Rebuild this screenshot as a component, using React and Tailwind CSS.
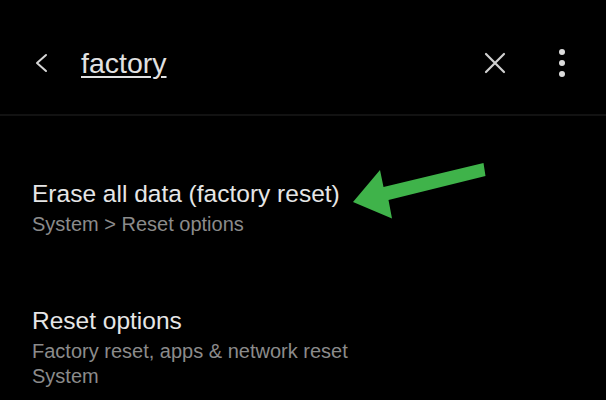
const font = { fontFamily: '"Liberation Sans", Arial, sans-serif' };

const ResultRow = ({ title, lines }) => (
  <div className="pt-[32px] pb-[36px] pl-[32px]">
    <div className="text-[24.5px] leading-[32px] text-[#e6e6e6]">{title}</div>
    <div className="mt-[2px]">
      {lines.map((line) => (
        <div key={line} className="text-[20px] leading-[25px] text-[#8b8b8b]">
          {line}
        </div>
      ))}
    </div>
  </div>
);

export default function App() {
  return (
    <div className="relative w-[606px] h-[400px] overflow-hidden bg-black" style={font}>
      {/* search bar */}
      <div className="flex items-center h-[114px] pt-[12px]">
        <button className="ml-[33px] w-[16px] h-[20px] flex items-center justify-center">
          <svg width="14" height="20" viewBox="0 0 14 20" fill="none">
            <path d="M12 2 L3 10 L12 18" stroke="#d6d6d6" strokeWidth="2" strokeLinecap="round" strokeLinejoin="round" />
          </svg>
        </button>
        <span className="ml-[32px] text-[28.5px] leading-[34px] text-[#e2e2e2] underline decoration-[1.5px] underline-offset-[3px]">
          factory
        </span>
        <div className="flex-1" />
        <svg width="22" height="22" viewBox="0 0 22 22" fill="none" className="mr-[53px]">
          <path d="M2 2 L20 20 M20 2 L2 20" stroke="#d0d0d0" strokeWidth="2.2" strokeLinecap="round" />
        </svg>
        <div className="flex flex-col gap-[5px] mr-[41px]">
          <div className="w-[6px] h-[6px] rounded-full bg-[#dcdcdc]" />
          <div className="w-[6px] h-[6px] rounded-full bg-[#dcdcdc]" />
          <div className="w-[6px] h-[6px] rounded-full bg-[#dcdcdc]" />
        </div>
      </div>
      <div className="h-[1.5px] bg-[#121212]" />

      <div className="pt-[30px]">
        <ResultRow title="Erase all data (factory reset)" lines={["System > Reset options"]} />
        <ResultRow title="Reset options" lines={["Factory reset, apps & network reset", "System"]} />
      </div>

      {/* annotation arrow */}
      <svg className="absolute left-0 top-0 pointer-events-none" width="606" height="400" viewBox="0 0 606 400">
        <polygon
          points="353,202 380,170 383.5,187 483.5,163 485.5,176 388.5,200 392,218.5"
          fill="#3fb34a"
          strokeLinejoin="round"
        />
      </svg>
    </div>
  );
}
